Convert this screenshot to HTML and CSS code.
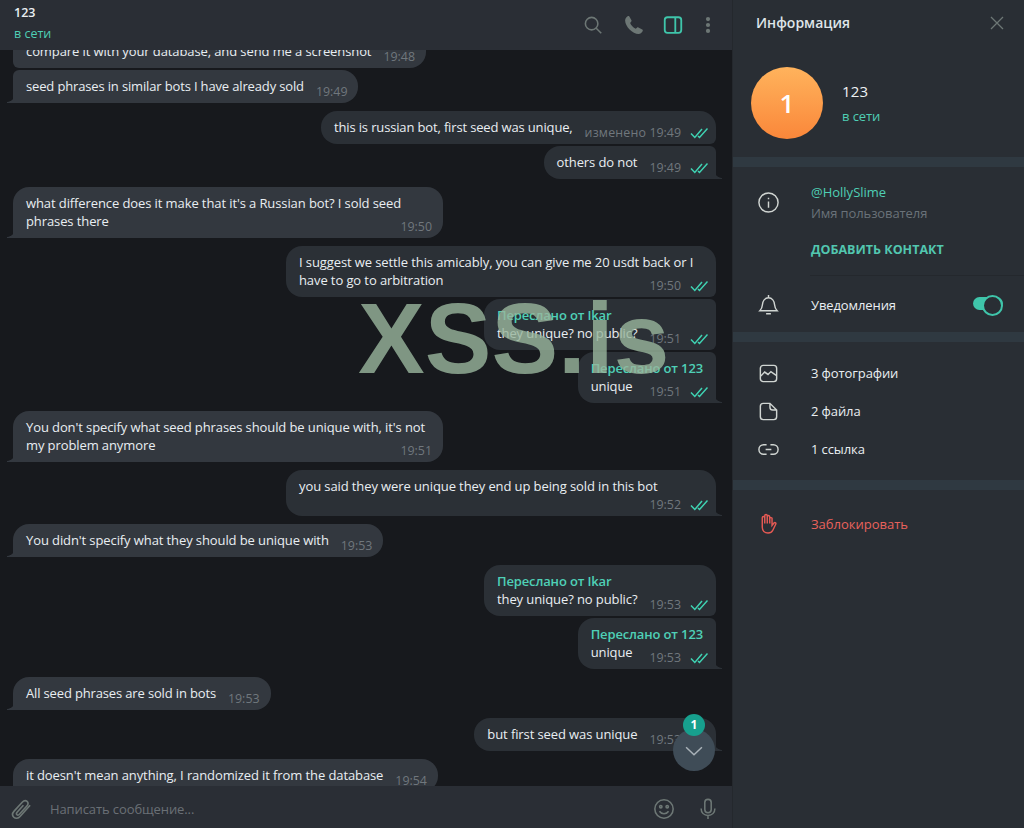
FILE: index.html
```html
<!DOCTYPE html>
<html lang="ru">
<head>
<meta charset="utf-8">
<title>123</title>
<link rel="stylesheet" href="styles.css">
</head>
<body>
<svg class="defs" width="0" height="0" aria-hidden="true">
  <symbol id="checks" viewBox="0 0 18 12"><path d="M1 6.500l3.800 4L12 2M8 9l1.500 1.500L17.500 1.500" fill="none" stroke="currentColor" stroke-width="1.500"/></symbol>
</svg>
<div class="app">
  <main class="chat">
    <header class="chat-head">
      <div class="peer">
        <div class="peer-name">123</div>
        <div class="peer-status">в сети</div>
      </div>
      <div class="head-actions">
        <svg class="ic" viewBox="0 0 24 24"><circle cx="10.500" cy="10.500" r="6.800"/><path d="M15.500 15.500l5.500 5.500"/></svg>
        <svg class="ic ic-solid ic-phone" viewBox="0 0 24 24"><path d="M6.800 2.500l2.400 4.200c.3.600.2 1.200-.2 1.600L7.800 9.800c.9 2.500 3.400 5.100 6.100 6.300l1.300-1.200c.5-.4 1-.5 1.600-.2l4.200 2.300c.7.400.8 1.100.4 1.700-1 1.500-2.500 3-4.400 3C10.500 21.700 2.300 13.500 2.300 7c0-1.700 1-3.300 2.500-4.400.7-.5 1.600-.5 2 0z"/></svg>
        <svg class="ic ic-on" viewBox="0 0 24 24"><rect x="3" y="3.500" width="18" height="17" rx="3"/><path d="M14.500 3.500v17"/></svg>
        <svg class="ic ic-solid ic-dots" viewBox="0 0 24 24"><circle cx="12" cy="5.500" r="2.300"/><circle cx="12" cy="12" r="2.300"/><circle cx="12" cy="18.500" r="2.300"/></svg>
      </div>
    </header>

    <section class="messages">
      <div class="list">
        <div class="group in">
          <div class="bubble">compare it with your database, and send me a screenshot<span class="meta">19:48</span></div>
          <div class="bubble tail tight">seed phrases in similar bots I have already sold<span class="meta">19:49</span></div>
        </div>
        <div class="group out">
          <div class="bubble tight">this is russian bot, first seed was unique,<span class="meta"><span class="edited">изменено</span>&nbsp;19:49<svg class="chk"><use href="#checks"/></svg></span></div>
          <div class="bubble tail">others do not<span class="meta">19:49<svg class="chk"><use href="#checks"/></svg></span></div>
        </div>
        <div class="group in">
          <div class="bubble tail">what difference does it make that it's a Russian bot? I sold seed phrases there<span class="meta">19:50</span></div>
        </div>
        <div class="group out">
          <div class="bubble">I suggest we settle this amicably, you can give me 20 usdt back or I have to go to arbitration<span class="meta">19:50<svg class="chk"><use href="#checks"/></svg></span></div>
          <div class="bubble"><div class="fwd">Переслано от Ikar</div>they unique? no public?<span class="meta">19:51<svg class="chk"><use href="#checks"/></svg></span></div>
          <div class="bubble tail"><div class="fwd">Переслано от 123</div>unique<span class="meta">19:51<svg class="chk"><use href="#checks"/></svg></span></div>
        </div>
        <div class="group in">
          <div class="bubble tail">You don't specify what seed phrases should be unique with, it's not my problem anymore<span class="meta">19:51</span></div>
        </div>
        <div class="group out">
          <div class="bubble tail">you said they were unique they end up being sold in this bot<span class="meta meta-wrapped">19:52<svg class="chk"><use href="#checks"/></svg></span></div>
        </div>
        <div class="group in">
          <div class="bubble tail">You didn't specify what they should be unique with<span class="meta">19:53</span></div>
        </div>
        <div class="group out">
          <div class="bubble"><div class="fwd">Переслано от Ikar</div>they unique? no public?<span class="meta">19:53<svg class="chk"><use href="#checks"/></svg></span></div>
          <div class="bubble tail"><div class="fwd">Переслано от 123</div>unique<span class="meta">19:53<svg class="chk"><use href="#checks"/></svg></span></div>
        </div>
        <div class="group in">
          <div class="bubble tail tight">All seed phrases are sold in bots<span class="meta">19:53</span></div>
        </div>
        <div class="group out">
          <div class="bubble tail">but first seed was unique<span class="meta">19:53<svg class="chk"><use href="#checks"/></svg></span></div>
        </div>
        <div class="group in">
          <div class="bubble tail">it doesn't mean anything, I randomized it from the database<span class="meta">19:54</span></div>
        </div>
      </div>
      <div class="scroll-down">
        <span class="badge">1</span>
        <svg viewBox="0 0 24 24" class="chev"><path d="M2.500 7.500l9.500 9 9.500-9"/></svg>
      </div>
    </section>

    <footer class="composer">
      <svg class="ic ic-attach" viewBox="0 0 24 24"><path d="M21 7.500L10.500 19.300c-2 2.200-4.800 2.400-6.500.8-1.700-1.600-1.600-4.300.3-6.400L13 4.200c1.500-1.600 3.500-1.800 4.800-.6 1.300 1.200 1.200 3.100-.2 4.700l-7.800 8.700c-.8.900-1.900 1-2.600.4-.7-.7-.6-1.700.2-2.600L14 7.500"/></svg>
      <div class="placeholder">Написать сообщение...</div>
      <svg class="ic ic-emoji" viewBox="0 0 24 24"><circle cx="12" cy="12" r="10"/><circle class="dot" cx="8.500" cy="9.500" r="1.300"/><circle class="dot" cx="15.500" cy="9.500" r="1.300"/><path d="M7 14.500c1.200 1.800 3 2.700 5 2.700s3.800-.9 5-2.700"/></svg>
      <svg class="ic ic-mic" viewBox="0 0 24 24"><rect x="8.500" y="1.500" width="7" height="14.500" rx="3.500"/><path d="M4.500 11.500c0 4.500 3.200 7.500 7.500 7.500s7.500-3 7.500-7.500M12 19v4"/></svg>
    </footer>
  </main>

  <aside class="panel">
    <header class="panel-head">
      <span class="panel-title">Информация</span>
      <svg class="ic ic-close" viewBox="0 0 14 14"><path d="M1 1l12 12M13 1L1 13"/></svg>
    </header>
    <div class="profile">
      <div class="avatar">1</div>
      <div>
        <div class="profile-name">123</div>
        <div class="profile-status">в сети</div>
      </div>
    </div>
    <div class="sep"></div>
    <section class="info">
      <div class="info-row">
        <svg class="pi" viewBox="0 0 24 24"><circle cx="12" cy="12" r="10"/><path d="M12 11v6.500M12 7v1.500"/></svg>
        <div>
          <div class="username">@HollySlime</div>
          <div class="hint">Имя пользователя</div>
        </div>
      </div>
      <div class="add">ДОБАВИТЬ КОНТАКТ</div>
      <div class="divider"></div>
      <div class="notify">
        <svg class="pi" viewBox="0 0 24 24"><path d="M3 18.500c1.500-1.500 2.400-3.500 2.600-6 .3-4 2.700-7.500 6.400-7.500s6.100 3.500 6.400 7.500c.2 2.500 1.100 4.500 2.600 6zM12 2v3M9.500 21.700h5"/></svg>
        <span class="label">Уведомления</span>
        <span class="switch"></span>
      </div>
    </section>
    <div class="sep"></div>
    <section class="media">
      <div class="media-row">
        <svg class="pi" viewBox="0 0 24 24"><rect x="3.500" y="3.500" width="17" height="17" rx="3"/><path d="M4 14.500l4-4 3.500 2.500 3-3 5.500 4"/></svg>
        <span class="label">3 фотографии</span>
      </div>
      <div class="media-row">
        <svg class="pi" viewBox="0 0 24 24"><path d="M13.500 3.500H6.500a3 3 0 0 0-3 3v11a3 3 0 0 0 3 3h11a3 3 0 0 0 3-3v-7zM13.500 3.500v4a3 3 0 0 0 3 3h4"/></svg>
        <span class="label">2 файла</span>
      </div>
      <div class="media-row">
        <svg class="pi" viewBox="0 0 24 24"><path d="M10 7H7a5 5 0 0 0 0 10h3M14 7h3a5 5 0 0 1 0 10h-3M9 12h6"/></svg>
        <span class="label">1 ссылка</span>
      </div>
    </section>
    <div class="sep"></div>
    <section class="block">
      <svg class="pi pi-red" viewBox="0 0 24 24"><path d="M5.500 13V6a1.300 1.300 0 0 1 2.600 0v-2a1.300 1.300 0 0 1 2.600 0v1a1.300 1.300 0 0 1 2.600 0v2a1.300 1.300 0 0 1 2.400-.5V14l2-2.500c1.200-1.200 2.500 0 1.800 1.300L16.500 19c-1 2-2.500 3-5 3-3.500 0-6-2.500-6-6V8M8.100 6v6M10.700 4v8M13.300 5v7"/></svg>
      <span class="danger">Заблокировать</span>
    </section>
  </aside>

  <div class="watermark">XSS.is</div>
</div>
</body>
</html>
```

FILE: styles.css
```css
* { box-sizing: border-box; }
html, body { margin: 0; height: 100%; }
body {
  font-family: "Open Sans", "Noto Sans", sans-serif;
  font-size: 13px;
  line-height: 18px;
  letter-spacing: -.1px;
  color: #e9eef2;
  background: #17191d;
  overflow: hidden;
}
.defs { position: absolute; }
.app { display: flex; height: 828px; position: relative; overflow: hidden; }

.chat { width: 732px; display: flex; flex-direction: column; height: 828px; }
.chat-head {
  height: 50px; flex: none; background: #2a2e35;
  display: flex; align-items: center; justify-content: space-between;
  padding: 0 13px 0 14px; position: relative; z-index: 1;
}
.peer-name { font-weight: 600; font-size: 12.500px; line-height: 18px; margin-top: -3px; letter-spacing: 0; }
.peer-status { color: #4fcfb5; font-size: 12.500px; line-height: 18px; margin-top: 3px; letter-spacing: 0; }
.head-actions { display: flex; align-items: center; }

.ic { width: 22px; height: 22px; fill: none; stroke: #6d7775; stroke-width: 1.700; flex: none; }
.ic-solid { fill: #6d7775; stroke: none; }
.ic-phone { margin-left: 19px; }
.ic-on { stroke: #3fc5aa; stroke-width: 2; margin-left: 17px; }
.ic-dots { margin-left: 13px; }

.messages { flex: 1; min-height: 0; position: relative; overflow: hidden; }
.list { display: flex; flex-direction: column; gap: 8px; margin-top: -15px; }
.group { display: flex; flex-direction: column; gap: 2px; }
.group.in { align-items: flex-start; padding-left: 13px; }
.group.out { align-items: flex-end; padding-right: 16px; }

.bubble {
  position: relative; display: flow-root; max-width: 430px;
  padding: 6.500px 11px 8.500px 13px; border-radius: 16px;
}
.bubble.tight { letter-spacing: -.15px; }
.in .bubble { background: #33383f; border-bottom-left-radius: 6px; border-top-left-radius: 6px; }
.out .bubble { background: #2b3036; padding-right: 8px; border-bottom-right-radius: 6px; border-top-right-radius: 6px; }
.in .bubble:first-child { border-top-left-radius: 16px; }
.out .bubble:first-child { border-top-right-radius: 16px; }
.bubble.tail::after {
  content: ""; position: absolute; bottom: 0; width: 8px; height: 9px;
}
.in .bubble.tail { border-bottom-left-radius: 0; }
.out .bubble.tail { border-bottom-right-radius: 0; }
.in .bubble.tail::after { left: -6px; background: radial-gradient(circle at 0 0, transparent 7.500px, #33383f 8.200px); }
.out .bubble.tail::after { right: -6px; background: radial-gradient(circle at 100% 0, transparent 7.500px, #2b3036 8.200px); }

.meta {
  float: right; margin: 7px 0 -10px 12px; line-height: 16px; font-size: 12.400px; letter-spacing: 0;
  color: #70777d; white-space: nowrap; display: flex; align-items: center;
}
.meta-wrapped { margin-top: 2px; margin-bottom: -5px; }
.edited { letter-spacing: .2px; }
.chk { width: 18px; height: 12px; margin-left: 9px; color: #3fd3b3; }
.fwd { color: #4fd0b7; font-weight: 600; white-space: nowrap; letter-spacing: -.14px; }
.out .fwd { margin-right: 5px; }

.scroll-down {
  position: absolute; right: 17px; bottom: 15px; width: 42px; height: 42px;
  border-radius: 50%; background: #3f4c57;
  display: flex; align-items: center; justify-content: center;
}
.chev { width: 20px; height: 20px; fill: none; stroke: #a9b2b8; stroke-width: 1.800; margin-top: 2px; }
.badge {
  position: absolute; top: -15px; left: 10px; width: 22px; height: 22px; border-radius: 50%;
  background: #17a08e; color: #fff; font-size: 12px; font-weight: 700;
  display: flex; align-items: center; justify-content: center;
}

.composer {
  height: 42px; flex: none; background: #2a2e35;
  display: flex; align-items: center; padding: 4px 13px 0 10px; position: relative;
}
.ic-attach { width: 23px; height: 23px; }
.placeholder { flex: 1; color: #6a7076; margin-left: 17px; }
.ic-emoji { margin-right: 22px; }
.ic-mic { width: 22px; height: 24px; }

.panel { width: 292px; flex: none; background: #292e34; border-left: 1px solid #24282d; display: flex; flex-direction: column; height: 828px; }
.panel-head { height: 46px; display: flex; align-items: center; justify-content: space-between; padding: 0 20px 0 23px; }
.panel-title { font-size: 14px; font-weight: 600; color: #dfe5e8; letter-spacing: 0; }
.ic-close { width: 14px; height: 14px; stroke-width: 1.300; }
.profile { display: flex; align-items: center; gap: 19px; padding: 21px 0 18px 18px; }
.avatar {
  width: 72px; height: 72px; border-radius: 50%;
  background: linear-gradient(#ffb35c, #fa873a); color: #fff;
  font-size: 26px; font-weight: 600;
  display: flex; align-items: center; justify-content: center;
}
.profile-name { font-size: 15px; line-height: 20px; color: #eef2f4; letter-spacing: .2px; }
.profile-status { color: #4fcfb5; margin-top: 6px; }
.sep { height: 10px; background: #2f3941; flex: none; }
.pi { width: 23px; height: 23px; fill: none; stroke: #d0d5d2; stroke-width: 1.500; flex: none; }
.pi-red { stroke: #e65a54; stroke-width: 1.500; }
.label { color: #e9eef2; }

.info { padding-top: 16px; }
.info-row { display: flex; align-items: center; gap: 31px; padding-left: 24px; }
.username { color: #4fcfb5; letter-spacing: 0; }
.hint { color: #6a7279; margin-top: 3px; }
.add { margin: 19px 0 0 78px; font-weight: 700; color: #52c7b0; font-size: 12.500px; letter-spacing: 0; }
.divider { margin: 16px 0 0 77px; height: 1px; background: #24282d; }
.notify { display: flex; align-items: center; height: 56px; padding: 1px 21px 0 24px; gap: 31px; }
.switch {
  margin-left: auto; width: 30px; height: 13px; border-radius: 7px; background: #3fc5aa; position: relative; margin-top: -3px;
}
.switch::after {
  content: ""; position: absolute; right: 0; top: -2px; width: 17px; height: 17px; border-radius: 50%;
  background: #292e34; border: 2.500px solid #3fc5aa;
}

.media { padding: 12px 0 12px 24px; }
.media-row { display: flex; align-items: center; height: 38px; gap: 31px; }
.block { display: flex; align-items: center; gap: 31px; padding: 22px 0 0 24px; }
.danger { color: #e8625c; letter-spacing: 0; }

.watermark {
  position: absolute; left: 358px; top: 281px;
  font-family: "Liberation Sans", Arial, sans-serif; font-weight: 700; font-size: 100px; line-height: 115px; letter-spacing: 0;
  color: #99b69d; opacity: .8; white-space: nowrap; pointer-events: none;
}
```
